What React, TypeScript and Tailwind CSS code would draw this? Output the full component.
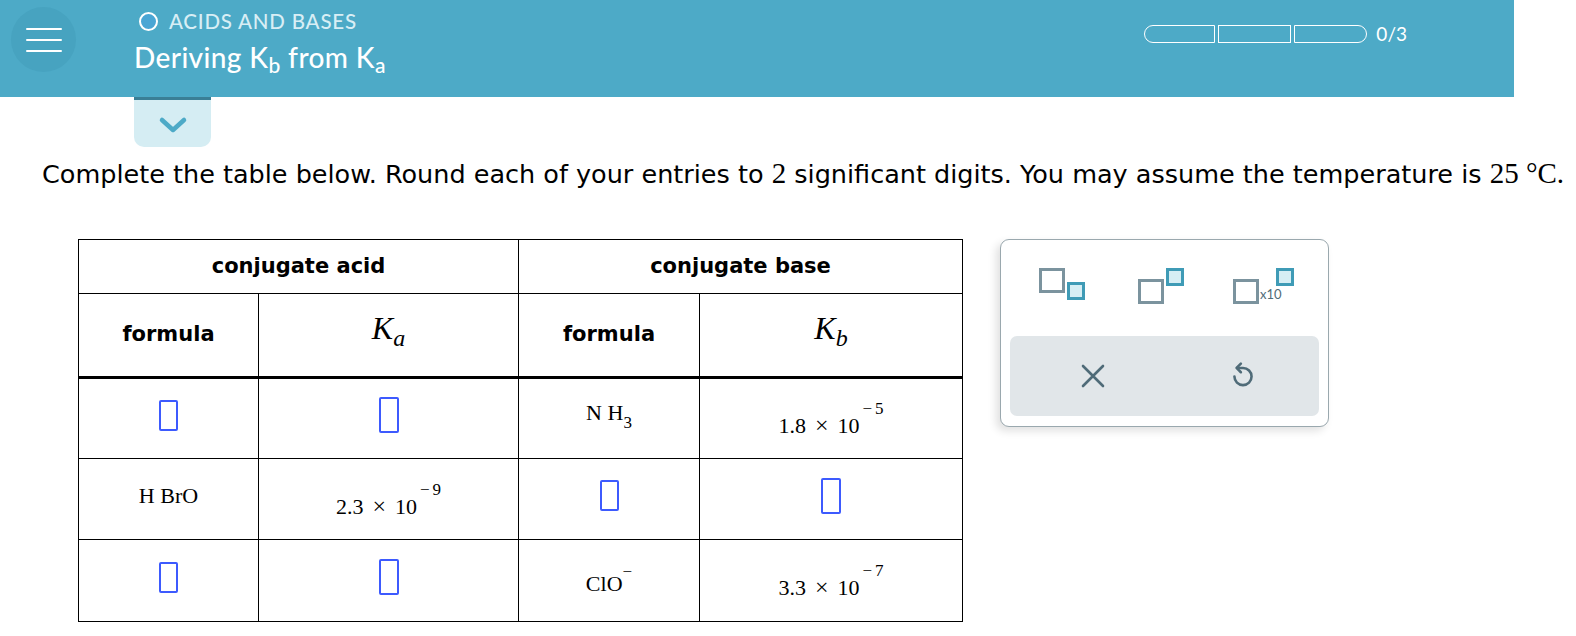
import React from "react";

const serif = { fontFamily: '"Liberation Serif", "Times New Roman", serif' };

function Slot({ tall = false }: { tall?: boolean }) {
  return (
    <span
      className={
        tall
          ? "inline-block h-[36px] w-[20px] rounded-[2px] border-2 border-[#3d5afe]"
          : "inline-block h-[31px] w-[19px] rounded-[2px] border-2 border-[#3d5afe]"
      }
    />
  );
}

function Sci({ m, e }: { m: string; e: string }) {
  return (
    <span className="relative inline-flex items-baseline pt-[14px] text-[22px] text-black" style={serif}>
      <span>{m}</span>
      <span className="mx-[9px] text-[24px] leading-none">×</span>
      <span>10</span>
      <span className="relative -top-[19px] ml-[3px] text-[17px]">
        <span className="mr-[3px]">−</span>
        {e}
      </span>
    </span>
  );
}

function PaletteSquares({ kind }: { kind: "sub" | "sup" | "x10" }) {
  const big = "h-[25px] w-[26px] border-[3px] border-[#7b939e] bg-white";
  const small = "h-[18px] w-[18px] border-[3px] border-[#3f9bb6] bg-[#d6eef4]";
  if (kind === "sub")
    return (
      <div className="flex items-start">
        <div className={big} />
        <div className={small + " ml-[2px] mt-[14px]"} />
      </div>
    );
  if (kind === "sup")
    return (
      <div className="flex items-start">
        <div className={big + " mt-[11px]"} />
        <div className={small + " ml-[2px]"} />
      </div>
    );
  return (
    <div className="flex items-start">
      <div className={big + " mt-[11px]"} />
      <span className="mt-[20px] ml-[1px] text-[13px] leading-none text-[#4f6b78]" style={{ fontFamily: "Lato, sans-serif" }}>
        x10
      </span>
      <div className={small + " -ml-[6px]"} />
    </div>
  );
}

export default function App() {
  const cell = "border border-black text-center align-middle";
  const head = cell + " text-[21px] font-bold";
  return (
    <div className="h-[636px] w-[1576px] overflow-hidden bg-white">
      {/* header */}
      <header className="flex h-[97px] w-[1514px] items-start bg-[#4daac7] text-white" style={{ fontFamily: "Lato, sans-serif" }}>
        <div className="ml-[11px] mt-[7px] flex h-[65px] w-[65px] flex-col items-center justify-center gap-[9px] rounded-full bg-[#47a3c0]">
          <span className="h-[2px] w-[36px] rounded bg-white" />
          <span className="h-[2px] w-[36px] rounded bg-white" />
          <span className="h-[2px] w-[36px] rounded bg-white" />
        </div>
        <div className="ml-[63px] mt-[6px] flex flex-col">
          <div className="flex items-center gap-[11px]">
            <span className="h-[19px] w-[19px] rounded-full border-2 border-white bg-[#4aa6d4]" />
            <span className="text-[20.5px] font-medium tracking-[0.8px] text-[#d8eef5]">ACIDS AND BASES</span>
          </div>
          <div className="-ml-[5px] mt-[6px] text-[28px] font-medium leading-none tracking-[0.4px]">
            Deriving K<sub className="text-[21px]">b</sub> from K<sub className="text-[21px]">a</sub>
          </div>
        </div>
        <div className="ml-auto mr-[107px] mt-[20px] flex items-center">
          <div className="flex gap-[3px]">
            <span className="h-[18px] w-[71px] rounded-l-full border-[1.5px] border-white" />
            <span className="h-[18px] w-[73px] border-[1.5px] border-white" />
            <span className="h-[18px] w-[73px] rounded-r-full border-[1.5px] border-white" />
          </div>
          <span className="ml-[9px] text-[19px]">0/3</span>
        </div>
      </header>

      {/* collapse tab */}
      <div className="ml-[134px] flex h-[50px] w-[77px] items-center justify-center rounded-b-[10px] border-t-[3px] border-[#3a7f96] bg-[#d5edf3]">
        <svg width="30" height="18" viewBox="0 0 30 18" className="mt-[2px]">
          <path d="M4 4 L15 14 L26 4" fill="none" stroke="#4daac7" strokeWidth="4.5" strokeLinecap="round" strokeLinejoin="round" />
        </svg>
      </div>

      {/* prompt */}
      <p
        className="ml-[42px] mt-[7px] h-[38px] whitespace-nowrap text-[25.5px] leading-[38px] text-black"
        style={{ fontFamily: '"DejaVu Sans", Verdana, sans-serif' }}
      >
        Complete the table below. Round each of your entries to{" "}
        <span className="text-[29px]" style={serif}>2</span> significant digits. You may assume the temperature is{" "}
        <span className="text-[29px]" style={serif}>25 °C.</span>
      </p>

      <div className="ml-[78px] mt-[47px] flex items-start">
        <table className="border-collapse" style={{ fontFamily: '"DejaVu Sans", Verdana, sans-serif' }}>
          <colgroup>
            <col className="w-[180px]" />
            <col className="w-[260px]" />
            <col className="w-[181px]" />
            <col className="w-[263px]" />
          </colgroup>
          <thead>
            <tr className="h-[54px]">
              <th colSpan={2} className={head}>conjugate acid</th>
              <th colSpan={2} className={head}>conjugate base</th>
            </tr>
            <tr className="h-[84px] border-b-[3px] border-black">
              <th className={head}>formula</th>
              <th className={cell + " pb-[14px] text-[32px] font-normal"} style={serif}>
                <i>K</i>
                <i className="relative top-[7px] text-[24px]">a</i>
              </th>
              <th className={head}>formula</th>
              <th className={cell + " pb-[14px] text-[32px] font-normal"} style={serif}>
                <i>K</i>
                <i className="relative top-[7px] text-[24px]">b</i>
              </th>
            </tr>
          </thead>
          <tbody>
            <tr className="h-[81px]">
              <td className={cell}><Slot /></td>
              <td className={cell}><Slot tall /></td>
              <td className={cell + " pb-[12px] text-[22px]"} style={serif}>
                N H<span className="relative top-[8px] text-[17px]">3</span>
              </td>
              <td className={cell}><Sci m="1.8" e="5" /></td>
            </tr>
            <tr className="h-[81px]">
              <td className={cell + " pb-[8px] text-[22px]"} style={serif}>H BrO</td>
              <td className={cell}><Sci m="2.3" e="9" /></td>
              <td className={cell}><Slot /></td>
              <td className={cell}><Slot tall /></td>
            </tr>
            <tr className="h-[82px]">
              <td className={cell}><Slot /></td>
              <td className={cell}><Slot tall /></td>
              <td className={cell + " pt-[6px] text-[22px]"} style={serif}>
                ClO<span className="relative -top-[14px] text-[17px]">−</span>
              </td>
              <td className={cell}><Sci m="3.3" e="7" /></td>
            </tr>
          </tbody>
        </table>

        {/* palette */}
        <div className="ml-[37px] flex h-[188px] w-[329px] flex-col rounded-[9px] border border-[#9aa8ae] bg-white shadow-[-4px_4px_8px_rgba(0,0,0,0.12)]">
          <div className="flex h-[96px] items-start justify-around px-[20px] pt-[28px]">
            <div className="ml-[4px]"><PaletteSquares kind="sub" /></div>
            <div className="ml-[24px]"><PaletteSquares kind="sup" /></div>
            <div className="ml-[20px]"><PaletteSquares kind="x10" /></div>
          </div>
          <div className="mx-[9px] flex h-[80px] items-center justify-around rounded-[7px] bg-[#e1e6e9] px-[20px]">
            <svg width="24" height="24" viewBox="0 0 24 24" className="ml-[8px]">
              <path d="M2 2 L22 22 M22 2 L2 22" stroke="#4f6b78" strokeWidth="2.6" strokeLinecap="round" />
            </svg>
            <svg width="26" height="30" viewBox="0 0 24 28" className="ml-[40px]">
              <path d="M10 2.5 L6 6.5 L10 10.5" fill="none" stroke="#4f6b78" strokeWidth="2.4" strokeLinecap="round" strokeLinejoin="round" />
              <path d="M6.5 6.5 H12 A8 8 0 1 1 4 14.5" fill="none" stroke="#4f6b78" strokeWidth="2.4" strokeLinecap="round" />
            </svg>
          </div>
        </div>
      </div>
    </div>
  );
}
